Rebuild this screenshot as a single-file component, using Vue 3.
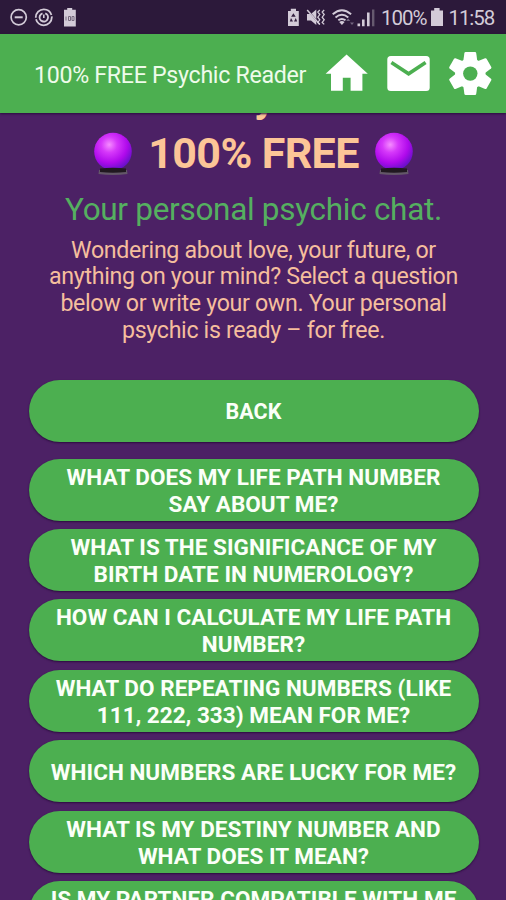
<script setup>
const questions = [
  ['WHAT DOES MY LIFE PATH NUMBER', 'SAY ABOUT ME?'],
  ['WHAT IS THE SIGNIFICANCE OF MY', 'BIRTH DATE IN NUMEROLOGY?'],
  ['HOW CAN I CALCULATE MY LIFE PATH', 'NUMBER?'],
  ['WHAT DO REPEATING NUMBERS (LIKE', '111, 222, 333) MEAN FOR ME?'],
  ['WHICH NUMBERS ARE LUCKY FOR ME?'],
  ['WHAT IS MY DESTINY NUMBER AND', 'WHAT DOES IT MEAN?'],
  ['IS MY PARTNER COMPATIBLE WITH ME'],
]
const teeth = [0, 60, 120, 180, 240, 300]
</script>

<template>
  <div class="screen">
    <div class="status">
      <svg class="status-left" width="80" height="34" viewBox="0 0 80 34" fill="none" stroke="#d3cbd8">
        <circle cx="18.7" cy="17.3" r="7.6" stroke-width="1.7" />
        <path d="M14.7 17.3h8" stroke-width="2" />
        <circle cx="43.8" cy="17.3" r="8" stroke-width="1.8" stroke-dasharray="23 1.5" />
        <circle cx="43.8" cy="17.3" r="4.2" stroke-width="1.9" stroke-dasharray="23 3.4" transform="rotate(-70 43.8 17.3)" />
        <path d="M43.8 14.5v3.5" stroke-width="1.6" />
        <path d="M64 9.8h3.2V8h5v1.8h3.6V26.5H64z" fill="#d3cbd8" stroke="none" />
        <path d="M66 16.5v4M68.5 16.5h2v4h-2zM72 16.5h2v4h-2z" stroke="#766a7e" stroke-width="1" />
      </svg>
      <svg class="status-icons" width="90" height="34" viewBox="286 0 90 34" fill="#d3cbd8">
        <path d="M288 11h2.8V8.8h5.2V11h2.8v15H288z" />
        <path d="M293.4 13.3l2.3 3.5h-4.6zM291 18l2 3.6h-3.2zM295.8 18l1.4 3.6H294z" fill="#33203f" />
        <path d="M307 14h4l5.3-4.6v15.7L311 20.5h-4z" />
        <path d="M306.3 8.5l14 16.5" stroke="#2c193a" stroke-width="1.5" />
        <path d="M307.2 10l12.6 14.5" stroke="#d3cbd8" stroke-width="1.5" />
        <path d="M319.8 10l-2 2 2 2.6-2 2.6 2 2.6-2 2.6 2 2M324.2 10l-2 2 2 2.6-2 2.6 2 2.6-2 2.6 2 2" fill="none" stroke="#d3cbd8" stroke-width="1.3" />
        <path d="M332.7 14.3q9.2-8 18.4 0M335.5 17.4q6.4-5.2 12.8 0M338.3 20.3q3.6-2.7 7.2 0" fill="none" stroke="#d3cbd8" stroke-width="1.9" />
        <path d="M339.2 22q2.8-2 5.4 0l-2.7 3z" />
        <path d="M346.2 21l2-2.5 2 2.5zM350 22.5l2 2.6 2-2.6z" fill="#746780" />
        <path d="M357.5 23.5h2.6v2.8h-2.6zM362 19.5h2.6v6.8H362zM367 12.5h2.6v13.8H367z" />
        <path d="M372 9.5h2.4v16.8H372z" fill="#66596f" />
      </svg>
      <span class="percent">100%</span>
      <svg class="battery" width="12" height="19" viewBox="0 0 12 19"><path d="M0 2.4h3.2V0h5.4v2.4H12V18H0z" fill="#d3cbd8" /></svg>
      <span class="clock">11:58</span>
    </div>

    <header class="bar">
      <span class="title">100% FREE Psychic Reader</span>
      <svg width="180" height="60" viewBox="322 44 180 60" fill="#fff">
        <path d="M346.6 54.4l21.2 19.4h-5.4v17h-11.8V77.8h-7.8v13h-11.8v-17h-5.4z" />
        <rect x="387.3" y="56" width="42.4" height="35" rx="3.5" />
        <path d="M391.4 62.5l17.2 11.3 17-11.3" fill="none" stroke="#4caf50" stroke-width="3.6" />
        <g transform="translate(470.3 73.6)">
          <path v-for="a in teeth" :key="a" d="M-4.7-21.5h9.4q1 0 1.2 1l1.3 9.5H-7.2l1.3-9.5q.2-1 1.2-1z" :transform="`rotate(${a})`" />
          <circle r="15.2" />
          <circle r="7.2" fill="#4caf50" />
        </g>
      </svg>
    </header>

    <main class="content">
      <div class="heading top">y</div>
      <div class="heading">
        <svg v-for="n in 2" :key="n" :class="['ball', n === 1 ? 'first' : 'last']" width="40" height="44" viewBox="0 0 40 44">
          <defs>
            <radialGradient :id="`orb${n}`" cx=".4" cy=".32" r=".7">
              <stop offset="0" stop-color="#f58cff" />
              <stop offset=".3" stop-color="#d638fa" />
              <stop offset=".68" stop-color="#b00aec" />
              <stop offset="1" stop-color="#6410c8" />
            </radialGradient>
          </defs>
          <path d="M6 38h28l.5 4q-14.5 2-29 0z" fill="#635768" />
          <circle cx="20" cy="19.5" r="18.8" :fill="`url(#orb${n})`" />
          <path d="M7 36.5q13-1.5 26 0v3.5q-13 1.5-26 0z" fill="#201820" />
        </svg>
        <span>100% FREE</span>
      </div>
      <div class="subtitle">Your personal psychic chat.</div>
      <p class="intro">
        Wondering about love, your future, or<br />anything on your mind? Select a question<br />below or write your own. Your personal<br />psychic is ready – for free.
      </p>
      <button class="pill back">BACK</button>
      <div class="list">
        <button v-for="q in questions" :key="q[0]" :class="['pill', { partial: q === questions[6] }]">
          <span v-for="line in q" :key="line">{{ line }}</span>
        </button>
      </div>
    </main>
  </div>
</template>

<style>
body {
  background: #4c2165;
  overflow: hidden;
}
</style>

<style scoped>
.screen {
  width: 506px;
  height: 900px;
  overflow: hidden;
  display: flex;
  flex-direction: column;
  background: #4c2165;
  font-family: Roboto, sans-serif;
  white-space: nowrap;
}
.status {
  height: 34px;
  flex: none;
  display: flex;
  align-items: center;
  background: #2c193a;
  color: #d3cbd8;
  font-size: 20.5px;
}
svg {
  display: block;
  flex: none;
}
.status-icons {
  margin-left: 206px;
}
.percent {
  width: 44px;
  margin-left: 5px;
  padding-top: 2px;
  letter-spacing: -1px;
}
.battery {
  margin-left: 5.5px;
}
.clock {
  margin-left: 6px;
  padding-top: 1px;
  letter-spacing: -1.1px;
}
.bar {
  height: 79px;
  flex: none;
  box-sizing: border-box;
  display: flex;
  align-items: center;
  padding-left: 34px;
  background: #4caf50;
  box-shadow: 0 1px 2px #2b0c3f;
  z-index: 1;
}
.bar svg {
  margin-left: auto;
  margin-right: 4px;
}
.title {
  padding-top: 2px;
  color: #eefbea;
  font-size: 23.2px;
  letter-spacing: -0.3px;
}
.content {
  flex: 1;
  min-height: 0;
  display: flex;
  flex-direction: column;
  align-items: center;
  margin-top: -46px;
  padding-left: 1px;
  text-align: center;
}
.heading {
  height: 57px;
  flex: none;
  display: flex;
  align-items: center;
  justify-content: center;
  gap: 15.5px;
  color: #fcc597;
  font-size: 43px;
  font-weight: 700;
  letter-spacing: -0.6px;
}
.top {
  padding-left: 22px;
}
.ball {
  margin-top: 2px;
}
.last {
  order: 2;
}
.subtitle {
  height: 44px;
  line-height: 44px;
  flex: none;
  margin-top: 6.5px;
  color: #55af60;
  font-size: 31.5px;
  letter-spacing: -0.3px;
}
.intro {
  margin: 5px 0 0;
  color: #f5be9d;
  font-size: 23.2px;
  letter-spacing: -0.33px;
  line-height: 26.8px;
}
.pill {
  width: 450px;
  height: 62px;
  flex: none;
  display: flex;
  flex-direction: column;
  align-items: center;
  justify-content: center;
  padding: 2px 0 0;
  border: 0;
  border-radius: 31px;
  background: #4caf50;
  box-shadow: 0 1px 2px #2b0c3f;
  color: #fbfff8;
  font: 700 22.5px/27px Roboto, sans-serif;
  letter-spacing: 0.04px;
}
.back {
  margin-top: 36.5px;
  padding: 0;
  font-size: 21.5px;
}
.list {
  display: flex;
  flex-direction: column;
  gap: 8.4px;
  margin-top: 16.4px;
}
.partial {
  justify-content: flex-start;
  padding-top: 5px;
}
</style>
